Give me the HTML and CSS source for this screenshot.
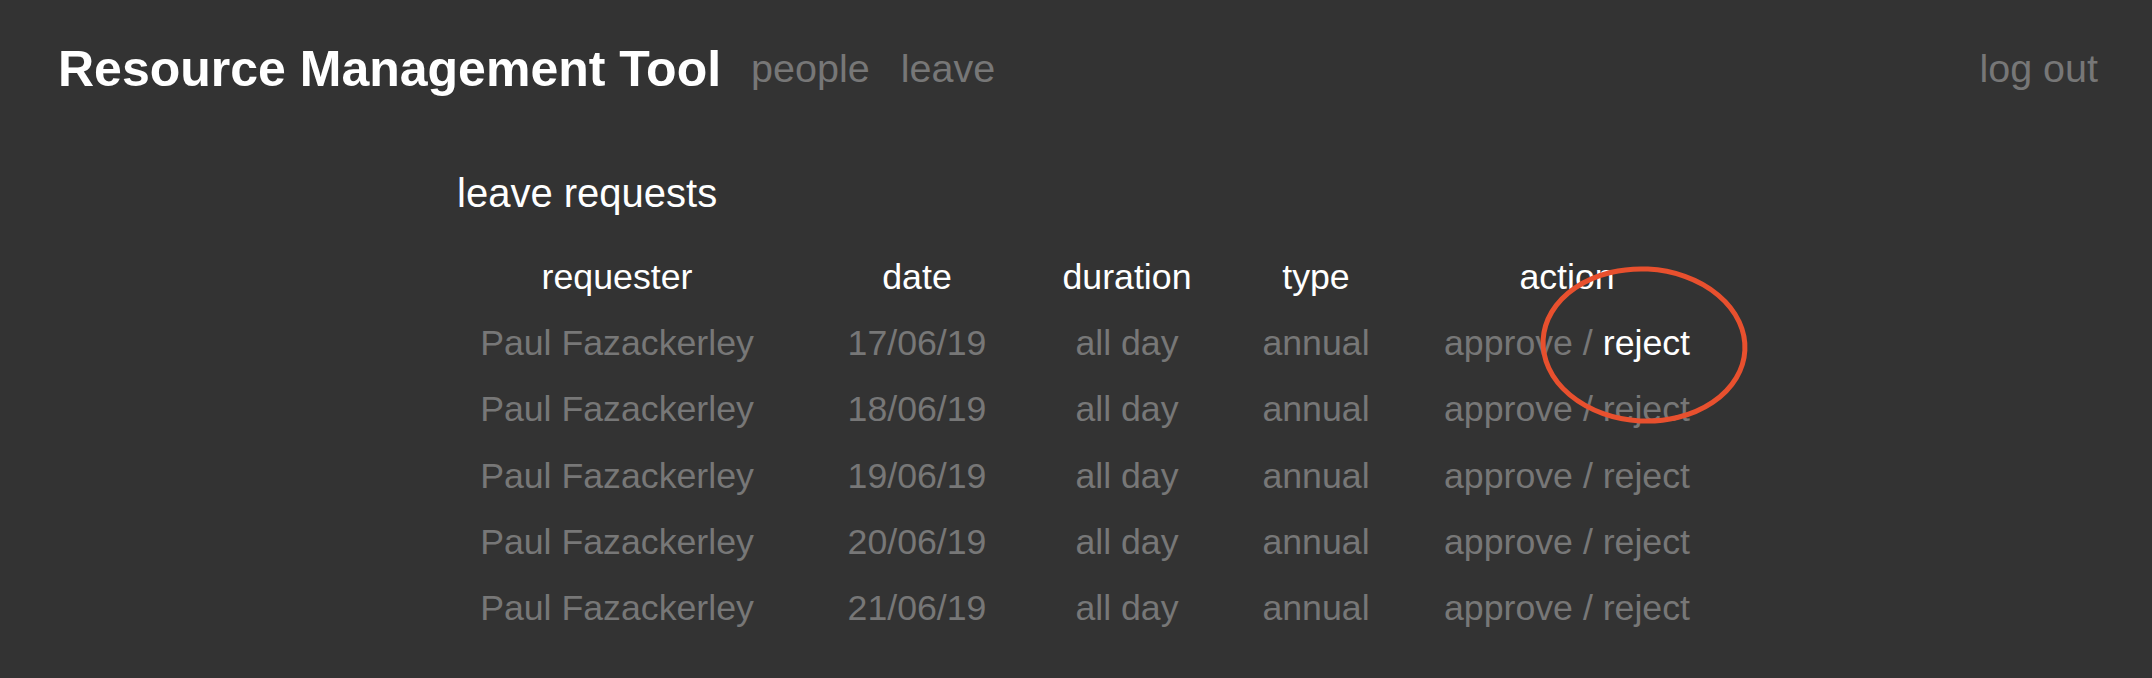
FILE: index.html
```html
<!DOCTYPE html>
<html lang="en">
<head>
<meta charset="utf-8">
<title>Resource Management Tool</title>
<link rel="stylesheet" href="styles.css">
</head>
<body>
<header class="topbar">
  <div class="brand-group">
    <h1 class="brand">Resource Management Tool</h1>
    <nav class="nav">
      <a class="nav-link" href="#">people</a>
      <a class="nav-link" href="#">leave</a>
    </nav>
  </div>
  <a class="nav-link" href="#">log out</a>
</header>
<main class="content">
  <h2 class="section-title">leave requests</h2>
  <div class="requests">
    <div class="cell head">requester</div>
    <div class="cell head">date</div>
    <div class="cell head">duration</div>
    <div class="cell head">type</div>
    <div class="cell head">action</div>

    <div class="cell">Paul Fazackerley</div>
    <div class="cell">17/06/19</div>
    <div class="cell">all day</div>
    <div class="cell">annual</div>
    <div class="cell">approve / <span class="hover">reject</span></div>

    <div class="cell">Paul Fazackerley</div>
    <div class="cell">18/06/19</div>
    <div class="cell">all day</div>
    <div class="cell">annual</div>
    <div class="cell">approve / reject</div>

    <div class="cell">Paul Fazackerley</div>
    <div class="cell">19/06/19</div>
    <div class="cell">all day</div>
    <div class="cell">annual</div>
    <div class="cell">approve / reject</div>

    <div class="cell">Paul Fazackerley</div>
    <div class="cell">20/06/19</div>
    <div class="cell">all day</div>
    <div class="cell">annual</div>
    <div class="cell">approve / reject</div>

    <div class="cell">Paul Fazackerley</div>
    <div class="cell">21/06/19</div>
    <div class="cell">all day</div>
    <div class="cell">annual</div>
    <div class="cell">approve / reject</div>
  </div>
</main>
<svg class="annotation" width="212" height="162" viewBox="0 0 212 162" aria-hidden="true">
  <ellipse cx="106" cy="81" rx="101" ry="76" fill="none" stroke="#e8502e" stroke-width="5" transform="rotate(3 106 81)"/>
</svg>
</body>
</html>
```

FILE: styles.css
```css
html, body {
  margin: 0;
  padding: 0;
  background: #333333;
  height: 100%;
}

body {
  font-family: "Liberation Sans", Arial, Helvetica, sans-serif;
  color: #ffffff;
  position: relative;
  overflow: hidden;
}

.topbar {
  height: 137px;
  display: flex;
  align-items: center;
  justify-content: space-between;
  padding: 0 54px 0 58px;
}

.brand-group {
  display: flex;
  align-items: center;
  gap: 30px;
}

.brand {
  margin: 1px 0 0;
  font-size: 50px;
  font-weight: bold;
  color: #ffffff;
  line-height: normal;
}

.nav {
  display: flex;
  align-items: center;
  gap: 31px;
}

.nav-link {
  font-size: 39.5px;
  color: #777777;
  text-decoration: none;
  line-height: normal;
}

.content {
  padding-left: 422px;
}

.section-title {
  margin: 32.5px 0 0 35px;
  font-size: 40px;
  font-weight: normal;
  line-height: 46px;
  color: #ffffff;
}

.requests {
  margin-top: 28.6px;
  display: grid;
  grid-template-columns: 390px 210px 210px 168px 334px;
  grid-auto-rows: 66.3px;
}

.cell {
  display: flex;
  align-items: center;
  justify-content: center;
  font-size: 35.7px;
  color: #777777;
  white-space: nowrap;
}

.cell.head {
  color: #ffffff;
}

.hover {
  color: #ffffff;
  margin-left: 0.28em;
}

.annotation {
  position: absolute;
  left: 1538px;
  top: 264px;
}
```
